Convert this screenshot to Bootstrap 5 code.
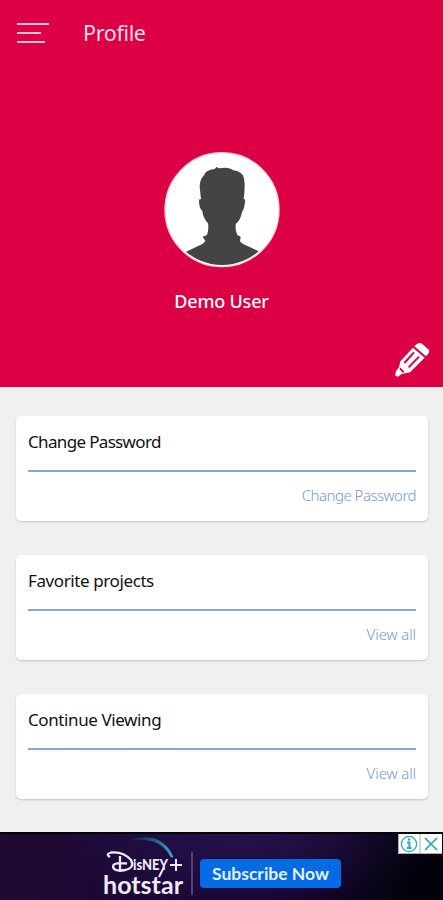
<!DOCTYPE html>
<html lang="en">
<head>
<meta charset="utf-8">
<meta name="viewport" content="width=device-width, initial-scale=1">
<title>Profile</title>
<link href="https://cdn.jsdelivr.net/npm/bootstrap@5.3.0/dist/css/bootstrap.min.css" rel="stylesheet">
<style>
body{font-family:"Noto Sans","Open Sans",sans-serif;background:#f0f0f0;height:900px}
svg{display:block}
.hero{background:#db0144;height:387px;color:#fff}
.topbar{height:66px;padding-left:16px;gap:34px}
.topbar h1{font-size:21.5px;letter-spacing:-.35px;line-height:30px;margin-top:-2px;color:#ffdce7}
.avatar{margin-top:86px}
.user-name{font-size:18px;line-height:26px;letter-spacing:-.2px;font-weight:500;margin-top:20px}
.edit{margin:28px 13px 0 0}
.stack{padding:29px 15px 0 16px;gap:34px}
.tile{height:105px;border-radius:5px;padding:0 12px;box-shadow:0 1px 2px rgba(0,0,0,.18)}
.tile h2{font-size:17px;letter-spacing:-.4px;line-height:24px;padding:14px 0 16px;height:54px;color:#111}
.tile h2.tight{letter-spacing:-.66px}
.tile-link{font-size:15px;letter-spacing:-.5px;line-height:22px;margin-top:12px;color:#7398d6;font-weight:300}
.tile-link.wide{letter-spacing:-.1px}
.rule{height:2px;background:#86a5dc}
.ad{height:68px;margin-top:33px;border-top:2px solid #030208;background:radial-gradient(ellipse 190px 75px at 245px 0,#241249,transparent),linear-gradient(90deg,#200a31,#1b0739 40%,#160632 65%,#03020c 92%)}
.ad-row{height:66px;padding-left:103px}
.split{width:2px;height:43px;background:#53436a;margin:18px 7px 0 7px}
.subscribe{width:141px;height:29px;margin-top:25px;background:#056be5;color:#e3efff;border-radius:4px;font:700 17.5px/29px Lato,sans-serif}
.ad-tools{top:0;right:1px}
</style>
</head>
<body class="overflow-hidden">
<header class="hero d-flex flex-column align-items-center">
  <nav class="topbar d-flex align-items-center align-self-stretch">
    <svg width="33" height="24" viewBox="0 0 33 24" stroke="#ffc4d8" stroke-width="2" aria-label="Menu"><path d="M1 3H33M1 12H25M1 21H29"/></svg>
    <h1 class="m-0 fw-normal">Profile</h1>
  </nav>
  <svg class="avatar flex-shrink-0" width="116" height="116" viewBox="36 36 348 348">
    <defs><clipPath id="disc"><circle cx="210" cy="208" r="167"/></clipPath></defs>
    <circle cx="210" cy="209" r="171" fill="#fff" stroke="#fbd3df" stroke-width="4"/>
    <path clip-path="url(#disc)" fill="#444" d="M90 341L137 319Q156 311 160 303L152 290L165 285Q171 268 168 250Q155 239 151 214Q141 205 141 181Q141 176 147 178L143 140Q143 119 156 106Q161 89 188 87L193 81L201 85Q232 80 244 91Q269 94 275 112Q281 131 275 177Q281 176 279 186Q277 207 270 216Q266 240 252 251Q248 267 256 285L266 290L264 304Q270 313 291 320L335 341L320 390H100Z"/>
  </svg>
  <div class="user-name">Demo User</div>
  <svg class="edit align-self-end flex-shrink-0" width="36" height="36" viewBox="42 36 108 108" fill="#fff" aria-label="Edit">
    <path d="M107 45Q117 36 126 41L145 58Q151 65 144 72L138 79L103 49Z"/>
    <path d="M99 53L134 83L90 127L65 132L54 140L46 137L47 125L57 111L61 94Z"/>
    <path d="M102 67L73 99M117 80L86 112M60 115L71 127" stroke="#db0144" stroke-width="6" fill="none"/>
  </svg>
</header>
<main class="stack d-flex flex-column">
  <section class="tile bg-white"><h2 class="tight m-0 fw-normal">Change Password</h2><div class="rule"></div><div class="tile-link text-end">Change Password</div></section>
  <section class="tile bg-white"><h2 class="m-0 fw-normal">Favorite projects</h2><div class="rule"></div><div class="tile-link wide text-end">View all</div></section>
  <section class="tile bg-white"><h2 class="m-0 fw-normal">Continue Viewing</h2><div class="rule"></div><div class="tile-link wide text-end">View all</div></section>
</main>
<footer class="ad position-relative">
  <div class="ad-row d-flex align-items-start">
    <svg width="81" height="66" viewBox="0 0 81 66" fill="#eee9f5">
      <defs><linearGradient id="arc"><stop stop-color="#1b3f7a" stop-opacity=".3"/><stop offset="1" stop-color="#3baed0"/></linearGradient></defs>
      <path d="M29 6Q39 2 52 5Q65 10 70 23L68 23Q62 11 50 7Q39 4 29 6Z" fill="url(#arc)" stroke="url(#arc)" stroke-width=".8"/>
      <path d="M7 23Q2 20 8 18.5Q20 17 28 26Q32 34 22 36Q10 38 10 32Q11 28 24 29.5M17 22V38" fill="none" stroke="#eee9f5" stroke-width="2.3"/>
      <text x="30" y="36" font-family="Lato,sans-serif" font-weight="900" font-size="15" textLength="35" lengthAdjust="spacingAndGlyphs">isNEY</text>
      <path d="M61 33L56 43M67 31H79M73 25V37" stroke="#eee9f5" stroke-width="2"/>
      <text x="0" y="60" font-family="Lato,sans-serif" font-weight="700" font-size="25" textLength="80" lengthAdjust="spacingAndGlyphs">hotstar</text>
    </svg>
    <div class="split"></div>
    <div class="subscribe text-center">Subscribe Now</div>
  </div>
  <svg class="ad-tools position-absolute" width="44" height="20" viewBox="0 0 44 20" fill="none" stroke="#25a9c0" stroke-width="1.7">
    <path d="M0 0H44V20H0Z" fill="#fff" stroke="none"/><path d="M22 0V20M.5 0V19.5H43.5" stroke="#aaa" stroke-width="1"/>
    <circle cx="11" cy="10" r="7.6" stroke-width="1.3"/><path d="M9 8.5H11.4V14M8.8 14H13.4" stroke-width="2"/><path d="M10 5.5H12.2" stroke-width="2.2"/><path d="M27 4L39 16M39 4L27 16"/>
  </svg>
</footer>
<script src="https://cdn.jsdelivr.net/npm/bootstrap@5.3.0/dist/js/bootstrap.bundle.min.js"></script>
</body>
</html>
